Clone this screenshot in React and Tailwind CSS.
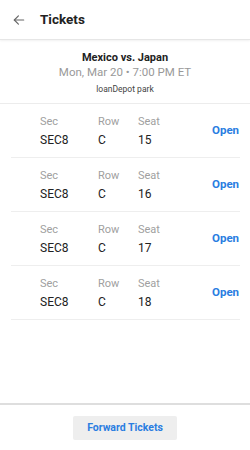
import React from "react";

const tickets = ["15", "16", "17", "18"];

export default function App() {
  return (
    <div className="h-[450px] w-[250px] bg-white flex flex-col overflow-hidden" style={{ fontFamily: "Roboto, 'Liberation Sans', sans-serif" }}>
      <div className="h-[40px] flex items-center border-b border-[#e6e6e6] shadow-[0_1px_2px_rgba(0,0,0,0.06)] shrink-0">
        <svg className="ml-[12px]" width="14" height="14" viewBox="0 0 24 24" fill="none" stroke="#666" strokeWidth="2" strokeLinecap="round" strokeLinejoin="round">
          <path d="M20 12H4" />
          <path d="M11 5l-7 7 7 7" />
        </svg>
        <span className="ml-[14px] text-[13.5px] font-bold text-[#222] leading-none">Tickets</span>
      </div>
      <div className="flex flex-col items-center pt-[10px] pb-[6px] border-b border-[#ececec] shrink-0">
        <div className="text-[11px] font-bold text-[#222] leading-[15px]">Mexico vs. Japan</div>
        <div className="text-[11.5px] text-[#999] leading-[15px]">Mon, Mar 20 • 7:00 PM ET</div>
        <div className="mt-[1px] text-[8.5px] text-[#444] leading-[16px]">loanDepot park</div>
      </div>
      <div className="flex-1 mx-[11px] w-[229px] overflow-hidden">
        {tickets.map((s) => (
          <div key={s} className="h-[54px] border-b border-[#eeeeee] flex items-center relative">
            <div className="flex flex-col ml-[29px] w-[58px]">
              <span className="text-[11px] text-[#a0a0a0] leading-[18px]">Sec</span>
              <span className="text-[12px] text-[#222] leading-[18px]">SEC8</span>
            </div>
            <div className="flex flex-col w-[40px]">
              <span className="text-[11px] text-[#a0a0a0] leading-[18px]">Row</span>
              <span className="text-[12px] text-[#222] leading-[18px]">C</span>
            </div>
            <div className="flex flex-col w-[60px]">
              <span className="text-[11px] text-[#a0a0a0] leading-[18px]">Seat</span>
              <span className="text-[12px] text-[#222] leading-[18px]">{s}</span>
            </div>
            <span className="ml-[14px] text-[11.5px] font-bold text-[#2a7de1] whitespace-nowrap">Open</span>
          </div>
        ))}
      </div>
      <div className="border-t-2 border-[#dedede] h-[47px] flex items-center justify-center shrink-0">
        <div className="w-[104px] h-[24px] bg-[#eeeeee] rounded-[2px] flex items-center justify-center text-[10.5px] font-bold text-[#2a7de1]">
          Forward Tickets
        </div>
      </div>
    </div>
  );
}
